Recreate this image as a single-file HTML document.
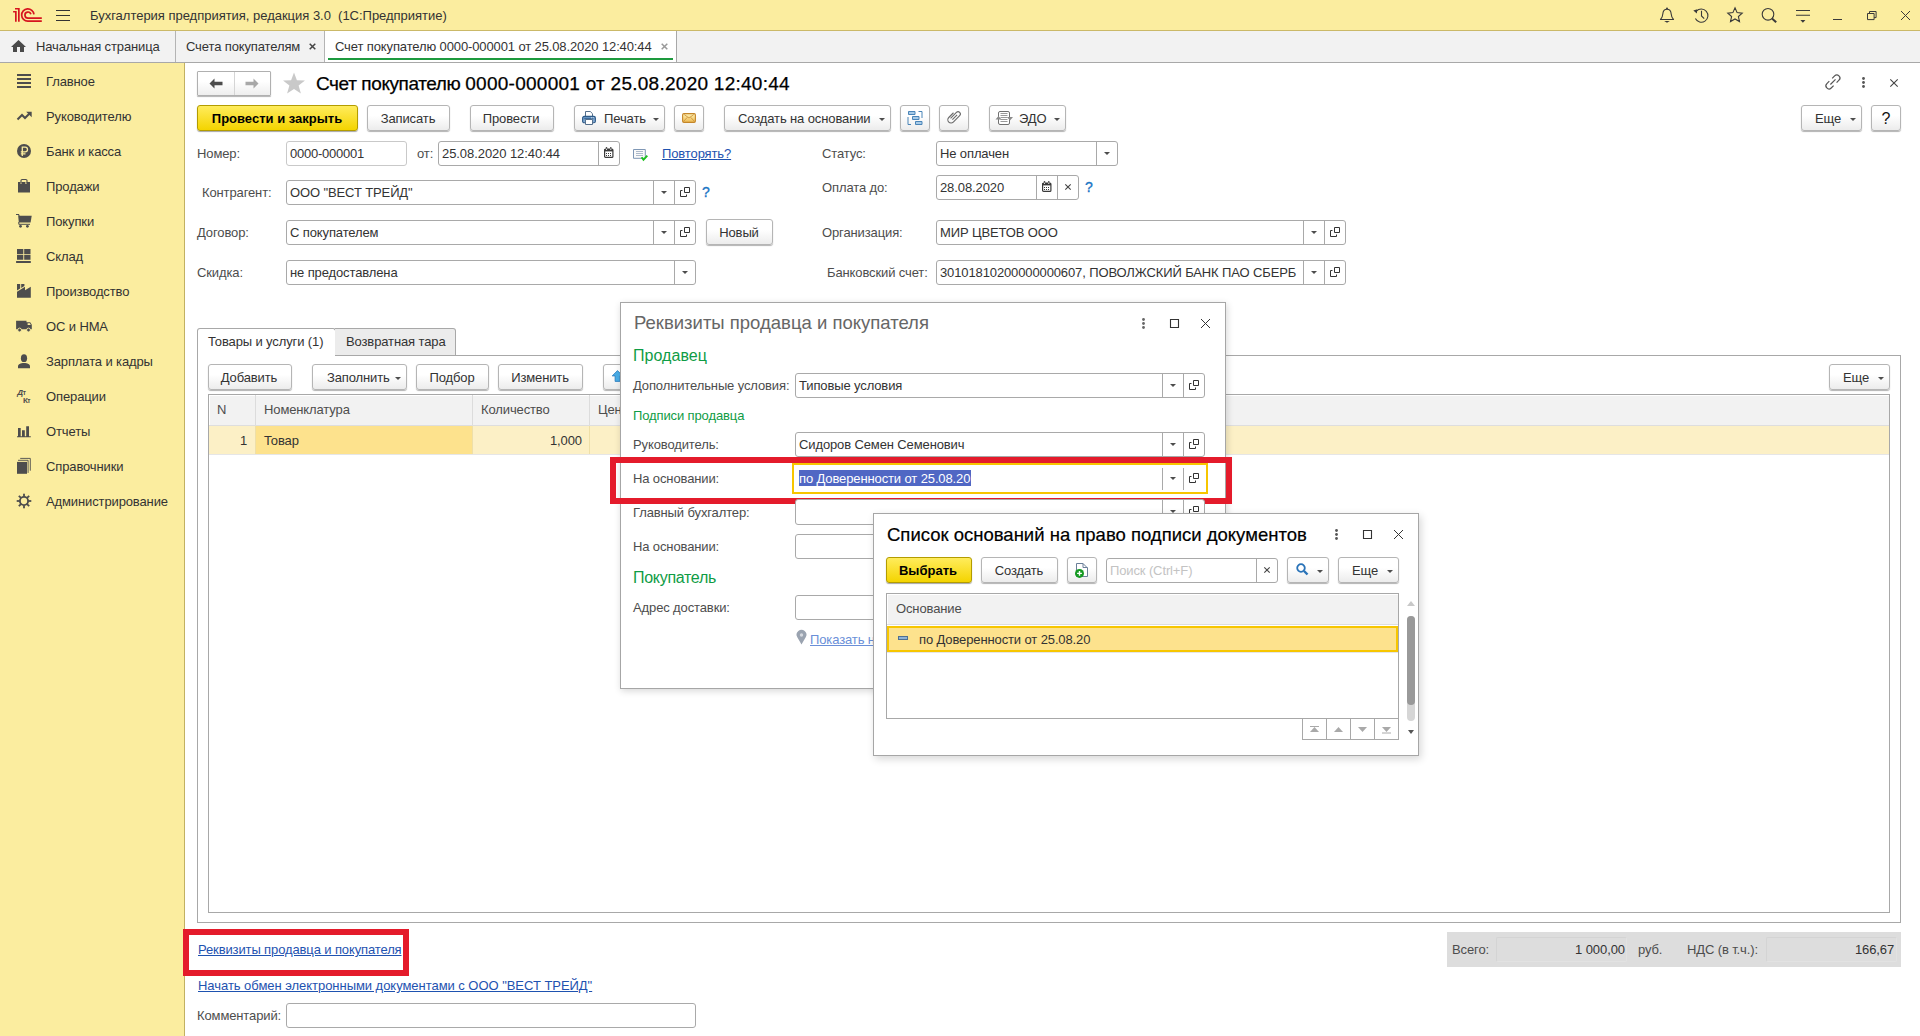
<!DOCTYPE html><html><head><meta charset="utf-8"><title>1C</title><style>
html,body{margin:0;padding:0;}
body{width:1920px;height:1036px;position:relative;overflow:hidden;background:#fff;font-family:'Liberation Sans', sans-serif;}
.t{position:absolute;white-space:pre;font-family:'Liberation Sans', sans-serif;}
.r{position:absolute;box-sizing:border-box;}
svg.r{overflow:visible;}

</style></head><body>
<div class="r" style="left:0px;top:0px;width:1920px;height:30px;background:#fbed9f;"></div>
<div class="r" style="left:0px;top:30px;width:1920px;height:1px;background:#cbb968;"></div>
<svg class="r" style="left:12px;top:7px;" width="31" height="16" viewBox="0 0 31 16"><path d="M1.1 4.75H3.85V14.8 M3 1.75H6.85V14.8" fill="none" stroke="#d6141f" stroke-width="1.7"/><path d="M21.97 7.35A6.17 6.17 0 1 0 15.8 14.2H29.8" fill="none" stroke="#d6141f" stroke-width="1.7"/><path d="M18.9 7.29A3.03 3.03 0 1 0 16 11.1H29.8" fill="none" stroke="#d6141f" stroke-width="1.7"/></svg>
<div class="r" style="left:56px;top:10px;width:14px;height:1px;background:#333333;"></div>
<div class="r" style="left:56px;top:15px;width:14px;height:1px;background:#333333;"></div>
<div class="r" style="left:56px;top:20px;width:14px;height:1px;background:#333333;"></div>
<div class="t" style="top:8px;font-size:13px;line-height:16px;color:#333333;letter-spacing:-0.02px;left:90px;">Бухгалтерия предприятия, редакция 3.0  (1С:Предприятие)</div>
<svg class="r" style="left:1659px;top:6px;" width="16" height="18" viewBox="0 0 16 18"><path d="M1.5 13.5C3 12 3.6 10.5 3.8 8C4 4.8 5.3 3.2 8 3.2C10.7 3.2 12 4.8 12.2 8C12.4 10.5 13 12 14.5 13.5Z" fill="none" stroke="#3a3a3a" stroke-width="1.1" stroke-linejoin="round"/><path d="M5.2 15H10.8L8 16.8Z" fill="#3a3a3a"/><circle cx="8" cy="2.4" r="1" fill="#3a3a3a"/></svg>
<svg class="r" style="left:1693px;top:7px;" width="17" height="17" viewBox="0 0 17 17"><path d="M3.4 4.2A6.6 6.6 0 1 1 2.4 11.5" fill="none" stroke="#3a3a3a" stroke-width="1.1"/><path d="M0.3 3.6L4.3 2.2L3.8 6.6Z" fill="#3a3a3a"/><path d="M8.5 3.8V9L11.2 11.6" fill="none" stroke="#3a3a3a" stroke-width="1.1"/></svg>
<svg class="r" style="left:1727px;top:7px;" width="16" height="16" viewBox="0 0 16 16"><path d="M8 0.8L10.1 5.6L15.2 6.1L11.4 9.5L12.5 14.6L8 12L3.5 14.6L4.6 9.5L0.8 6.1L5.9 5.6Z" fill="none" stroke="#3a3a3a" stroke-width="1.1" stroke-linejoin="miter"/></svg>
<svg class="r" style="left:1761px;top:7px;" width="17" height="17" viewBox="0 0 17 17"><circle cx="7" cy="7.3" r="5.8" fill="none" stroke="#3a3a3a" stroke-width="1.1"/><path d="M11 11.5L15.2 15.3" stroke="#3a3a3a" stroke-width="2"/></svg>
<svg class="r" style="left:1795px;top:8px;" width="16" height="16" viewBox="0 0 16 16"><path d="M1 2.5H15M1 7.3H15" stroke="#3a3a3a" stroke-width="1.1"/><path d="M5.4 12H10.4L7.9 14.8Z" fill="#3a3a3a"/></svg>
<div class="r" style="left:1833px;top:19px;width:9px;height:1px;background:#3a3a3a;"></div>
<svg class="r" style="left:1867px;top:11px;" width="10" height="10" viewBox="0 0 10 10"><path d="M0.5 2.5H7.1V8.6H0.5Z M2.5 2.5V0.5H9.1V6.6H7.1" fill="none" stroke="#3a3a3a" stroke-width="1"/></svg>
<svg class="r" style="left:1901px;top:11px;" width="9" height="9" viewBox="0 0 9 9"><path d="M0 0L9 9M9 0L0 9" stroke="#3a3a3a" stroke-width="1"/></svg>
<div class="r" style="left:0px;top:31px;width:1920px;height:31px;background:#f2f2f2;"></div>
<div class="r" style="left:0px;top:62px;width:1920px;height:1px;background:#a8a8a8;"></div>
<svg class="r" style="left:11px;top:40px;" width="15" height="12" viewBox="0 0 15 12"><path d="M7.5 0L15 7H13V12H9V7H6V12H2V7H0Z" fill="#4a4a4a"/></svg>
<div class="t" style="top:39px;font-size:13px;line-height:16px;color:#333333;letter-spacing:-0.12px;left:36px;">Начальная страница</div>
<div class="r" style="left:175px;top:31px;width:1px;height:31px;background:#b4b4b4;"></div>
<div class="t" style="top:39px;font-size:13px;line-height:16px;color:#333333;letter-spacing:-0.12px;left:186px;">Счета покупателям</div>
<svg class="r" style="left:309px;top:43px;" width="7" height="7" viewBox="0 0 7 7"><path d="M0.7 0.7L6.3 6.3M6.3 0.7L0.7 6.3" stroke="#444" stroke-width="1.5"/></svg>
<div class="r" style="left:324px;top:31px;width:1px;height:31px;background:#b4b4b4;"></div>
<div class="r" style="left:325px;top:31px;width:351px;height:31px;background:#ffffff;"></div>
<div class="r" style="left:676px;top:31px;width:1px;height:31px;background:#a8a8a8;"></div>
<div class="t" style="top:39px;font-size:13px;line-height:16px;color:#333333;letter-spacing:-0.12px;left:335px;">Счет покупателю 0000-000001 от 25.08.2020 12:40:44</div>
<svg class="r" style="left:661px;top:43px;" width="7" height="7" viewBox="0 0 7 7"><path d="M0.7 0.7L6.3 6.3M6.3 0.7L0.7 6.3" stroke="#999" stroke-width="1.5"/></svg>
<div class="r" style="left:328px;top:58px;width:345px;height:2px;background:#1d9a3e;"></div>
<div class="r" style="left:0px;top:63px;width:184px;height:973px;background:#fbed9f;"></div>
<div class="r" style="left:184px;top:63px;width:1px;height:973px;background:#c2b162;"></div>
<div class="t" style="top:74px;font-size:13px;line-height:16px;color:#333;letter-spacing:-0.12px;left:46px;">Главное</div>
<div class="t" style="top:109px;font-size:13px;line-height:16px;color:#333;letter-spacing:-0.12px;left:46px;">Руководителю</div>
<div class="t" style="top:144px;font-size:13px;line-height:16px;color:#333;letter-spacing:-0.12px;left:46px;">Банк и касса</div>
<div class="t" style="top:179px;font-size:13px;line-height:16px;color:#333;letter-spacing:-0.12px;left:46px;">Продажи</div>
<div class="t" style="top:214px;font-size:13px;line-height:16px;color:#333;letter-spacing:-0.12px;left:46px;">Покупки</div>
<div class="t" style="top:249px;font-size:13px;line-height:16px;color:#333;letter-spacing:-0.12px;left:46px;">Склад</div>
<div class="t" style="top:284px;font-size:13px;line-height:16px;color:#333;letter-spacing:-0.12px;left:46px;">Производство</div>
<div class="t" style="top:319px;font-size:13px;line-height:16px;color:#333;letter-spacing:-0.12px;left:46px;">ОС и НМА</div>
<div class="t" style="top:354px;font-size:13px;line-height:16px;color:#333;letter-spacing:-0.12px;left:46px;">Зарплата и кадры</div>
<div class="t" style="top:389px;font-size:13px;line-height:16px;color:#333;letter-spacing:-0.12px;left:46px;">Операции</div>
<div class="t" style="top:424px;font-size:13px;line-height:16px;color:#333;letter-spacing:-0.12px;left:46px;">Отчеты</div>
<div class="t" style="top:459px;font-size:13px;line-height:16px;color:#333;letter-spacing:-0.12px;left:46px;">Справочники</div>
<div class="t" style="top:494px;font-size:13px;line-height:16px;color:#333;letter-spacing:-0.12px;left:46px;">Администрирование</div>
<svg class="r" style="left:17px;top:74px;" width="15" height="15" viewBox="0 0 15 15"><path d="M0 1H14M0 5H14M0 9H14M0 13H14" stroke="#4d4d4d" stroke-width="1.8"/></svg>
<svg class="r" style="left:17px;top:109px;" width="15" height="15" viewBox="0 0 15 15"><path d="M0.5 10.5L5 6L8 9L12.5 4.5" fill="none" stroke="#4d4d4d" stroke-width="2"/><path d="M9.2 2.8H14.7V8.3Z" fill="#4d4d4d"/></svg>
<svg class="r" style="left:17px;top:144px;" width="15" height="15" viewBox="0 0 15 15"><circle cx="7" cy="7" r="7" fill="#4d4d4d"/><path d="M5.3 12V3.2H8.2A2.3 2.3 0 0 1 8.2 7.8H3.8M3.8 9.8H8.5" fill="none" stroke="#fbed9f" stroke-width="1.3"/></svg>
<svg class="r" style="left:17px;top:179px;" width="15" height="15" viewBox="0 0 15 15"><path d="M1 3H3.4V5H4.6V3H8.4V5H9.6V3H13V13.6H1Z" fill="#4d4d4d"/><path d="M4 4.5V1.6A1.1 1.1 0 0 1 5.1 0.5H8.9A1.1 1.1 0 0 1 10 1.6V4.5" fill="none" stroke="#4d4d4d" stroke-width="1.1"/></svg>
<svg class="r" style="left:17px;top:214px;" width="15" height="15" viewBox="0 0 15 15"><path d="M-1 0.5H1.6L2.2 2" fill="none" stroke="#4d4d4d" stroke-width="1.1"/><path d="M1.2 1.8H14.7L13.6 8.6H1.8Z" fill="#4d4d4d"/><path d="M1.8 8V10.3H13" fill="none" stroke="#4d4d4d" stroke-width="1"/><circle cx="3.5" cy="12.3" r="1.4" fill="#4d4d4d"/><circle cx="10.4" cy="12.3" r="1.4" fill="#4d4d4d"/></svg>
<svg class="r" style="left:17px;top:249px;" width="15" height="15" viewBox="0 0 15 15"><path d="M0 0H6.3V5H0Z M7.2 0H13.5V5H7.2Z M0 5.8H6.3V10.7H0Z M7.2 5.8H13.5V10.7H7.2Z M-0.9 12H13.8V13.9H-0.9Z" fill="#4d4d4d"/></svg>
<svg class="r" style="left:17px;top:284px;" width="15" height="15" viewBox="0 0 15 15"><path d="M0 13.8V7.8L8 2.8V6.3L13.8 2.8V13.8Z M0 0H3.2V4.6L0 6.6Z M4.2 0H7.4V2L4.2 4Z" fill="#4d4d4d"/></svg>
<svg class="r" style="left:17px;top:319px;" width="15" height="15" viewBox="0 0 15 15"><path d="M-0.9 1.7H9.5V10.2H-0.9Z M9.5 3.3H13.2L14.8 5.8V10.2H9.5Z" fill="#4d4d4d"/><path d="M10.6 4.3H12.9L13.8 6H10.6Z" fill="#fbed9f"/><circle cx="2.6" cy="11" r="1.9" fill="#4d4d4d" stroke="#fbed9f" stroke-width="0.9"/><circle cx="11.5" cy="11" r="1.9" fill="#4d4d4d" stroke="#fbed9f" stroke-width="0.9"/></svg>
<svg class="r" style="left:17px;top:354px;" width="15" height="15" viewBox="0 0 15 15"><ellipse cx="7" cy="4.2" rx="3.1" ry="3.9" fill="#4d4d4d"/><path d="M1 14.3V12.3C1 10.3 3.5 9 7 9C10.5 9 13 10.3 13 12.3V14.3Z" fill="#4d4d4d"/></svg>
<svg class="r" style="left:17px;top:389px;" width="15" height="15" viewBox="0 0 15 15"><text x="0.2" y="6" font-family="Liberation Sans" font-size="8" font-style="italic" font-weight="bold" fill="#4d4d4d">Д</text><text x="5.8" y="5.6" font-family="Liberation Sans" font-size="6.5" font-weight="bold" fill="#4d4d4d">т</text><text x="5.9" y="14" font-family="Liberation Sans" font-size="8" font-weight="bold" fill="#4d4d4d">К</text><text x="10.3" y="14" font-family="Liberation Sans" font-size="6.5" font-weight="bold" fill="#4d4d4d">т</text></svg>
<svg class="r" style="left:17px;top:424px;" width="15" height="15" viewBox="0 0 15 15"><path d="M1 4H3.7V12.5H1Z M5 6.3H7.8V12.5H5Z M9.2 2.2H12V12.5H9.2Z M0 12.3H13.8V13.2H0Z" fill="#4d4d4d"/></svg>
<svg class="r" style="left:17px;top:459px;" width="15" height="15" viewBox="0 0 15 15"><path d="M0 2.9H10V14.8H0Z" fill="#4d4d4d"/><path d="M1 1.3H11.1V13.9 M3.2 -0.6H13.3V11.7" fill="none" stroke="#4d4d4d" stroke-width="0.9"/></svg>
<svg class="r" style="left:17px;top:494px;" width="15" height="15" viewBox="0 0 15 15"><circle cx="7" cy="7" r="4.1" fill="none" stroke="#4d4d4d" stroke-width="1.9"/><rect x="6.1" y="-0.3" width="1.8" height="3" fill="#4d4d4d" transform="rotate(0 7 7)"/><rect x="6.1" y="-0.3" width="1.8" height="3" fill="#4d4d4d" transform="rotate(45 7 7)"/><rect x="6.1" y="-0.3" width="1.8" height="3" fill="#4d4d4d" transform="rotate(90 7 7)"/><rect x="6.1" y="-0.3" width="1.8" height="3" fill="#4d4d4d" transform="rotate(135 7 7)"/><rect x="6.1" y="-0.3" width="1.8" height="3" fill="#4d4d4d" transform="rotate(180 7 7)"/><rect x="6.1" y="-0.3" width="1.8" height="3" fill="#4d4d4d" transform="rotate(225 7 7)"/><rect x="6.1" y="-0.3" width="1.8" height="3" fill="#4d4d4d" transform="rotate(270 7 7)"/><rect x="6.1" y="-0.3" width="1.8" height="3" fill="#4d4d4d" transform="rotate(315 7 7)"/></svg>
<div class="r" style="left:197px;top:71px;width:74px;height:25px;border:1px solid #b0b0b0;border-radius:1px;background:linear-gradient(#ffffff 40%,#eeeeee);box-shadow:0 1px 1px rgba(0,0,0,0.3);"></div>
<div class="r" style="left:234px;top:72px;width:1px;height:23px;background:#d5d5d5;"></div>
<svg class="r" style="left:209px;top:78px;" width="14" height="11" viewBox="0 0 14 11"><path d="M0.5 5.5L5.5 0.5V3.8H13.5V7.2H5.5V10.5Z" fill="#4d4d4d"/></svg>
<svg class="r" style="left:245px;top:78px;" width="14" height="11" viewBox="0 0 14 11"><path d="M13.5 5.5L8.5 0.5V3.8H0.5V7.2H8.5V10.5Z" fill="#a8a8a8"/></svg>
<svg class="r" style="left:282px;top:72px;" width="24" height="22" viewBox="0 0 24 22"><path d="M12 0.5L14.9 8.2L23 8.4L16.6 13.5L18.9 21.5L12 16.9L5.1 21.5L7.4 13.5L1 8.4L9.1 8.2Z" fill="#c9c9c9"/></svg>
<div class="t" style="top:73px;left:316px;font-size:19px;line-height:22px;color:#000;-webkit-text-stroke:0.25px #000;"><span style="letter-spacing:-0.4px">Счет покупателю </span><span style="letter-spacing:0.26px">0000-000001 от 25.08.2020 12:40:44</span></div>
<svg class="r" style="left:1825px;top:74px;" width="16" height="16" viewBox="0 0 16 16"><path d="M7.2 4.3L9.6 1.9A3 3 0 0 1 14 6.2L11.6 8.6 M8.6 11.6L6.2 14A3 3 0 0 1 1.9 9.6L4.3 7.2 M5.4 10.5L10.5 5.4" fill="none" stroke="#555" stroke-width="1.2"/></svg>
<svg class="r" style="left:1862px;top:77px;" width="3" height="3" viewBox="0 0 3 3"><circle cx="1.5" cy="1.5" r="1.4" fill="#555"/></svg>
<svg class="r" style="left:1862px;top:81px;" width="3" height="3" viewBox="0 0 3 3"><circle cx="1.5" cy="1.5" r="1.4" fill="#555"/></svg>
<svg class="r" style="left:1862px;top:85px;" width="3" height="3" viewBox="0 0 3 3"><circle cx="1.5" cy="1.5" r="1.4" fill="#555"/></svg>
<svg class="r" style="left:1890px;top:79px;" width="8" height="8" viewBox="0 0 8 8"><path d="M0.3 0.3L7.7 7.7M7.7 0.3L0.3 7.7" stroke="#444" stroke-width="1.1"/></svg>
<div class="r" style="left:197px;top:105px;width:161px;height:26px;border:1px solid #b39c00;border-radius:3px;background:linear-gradient(#ffec5c,#f4d400);box-shadow:0 1px 1px rgba(0,0,0,0.35);box-sizing:border-box;"></div>
<div class="t" style="top:111px;font-size:13px;line-height:16px;color:#000;font-weight:bold;left:-23px;width:600px;text-align:center;">Провести и закрыть</div>
<div class="r" style="left:367px;top:105px;width:83px;height:26px;border:1px solid #b5b5b5;border-radius:3px;background:linear-gradient(#ffffff 40%,#ececec);box-shadow:0 1px 1px rgba(0,0,0,0.30);box-sizing:border-box;"></div>
<div class="t" style="top:111px;font-size:13px;line-height:16px;color:#333333;letter-spacing:-0.12px;left:108px;width:600px;text-align:center;">Записать</div>
<div class="r" style="left:470px;top:105px;width:84px;height:26px;border:1px solid #b5b5b5;border-radius:3px;background:linear-gradient(#ffffff 40%,#ececec);box-shadow:0 1px 1px rgba(0,0,0,0.30);box-sizing:border-box;"></div>
<div class="t" style="top:111px;font-size:13px;line-height:16px;color:#333333;letter-spacing:-0.12px;left:211px;width:600px;text-align:center;">Провести</div>
<div class="r" style="left:574px;top:105px;width:91px;height:26px;border:1px solid #b5b5b5;border-radius:3px;background:linear-gradient(#ffffff 40%,#ececec);box-shadow:0 1px 1px rgba(0,0,0,0.30);box-sizing:border-box;"></div>
<div class="t" style="top:111px;font-size:13px;line-height:16px;color:#333333;letter-spacing:-0.12px;left:604px;">Печать</div>
<svg class="r" style="left:653px;top:118px;" width="6" height="3" viewBox="0 0 6 3"><path d="M0 0H6L3.0 3Z" fill="#4d4d4d"/></svg>
<svg class="r" style="left:582px;top:111px;" width="14" height="14" viewBox="0 0 14 14"><defs><linearGradient id="pg" x1="0" y1="0" x2="0" y2="1"><stop offset="0" stop-color="#5f8fc0"/><stop offset="1" stop-color="#8fb3d8"/></linearGradient></defs><path d="M3.5 0.5H8.3L10.5 2.7V6H3.5Z" fill="#fff" stroke="#56708c"/><rect x="0.6" y="5.4" width="12.8" height="6.4" rx="1.6" fill="url(#pg)" stroke="#2f5b88" stroke-width="1.1"/><path d="M2.3 7.6H11.7" stroke="#2f5b88" stroke-width="0.8"/><circle cx="9.6" cy="6.8" r="0.5" fill="#fff"/><circle cx="11.2" cy="6.8" r="0.5" fill="#fff"/><path d="M3.5 8.5H10.5V13.5H3.5Z" fill="#fff" stroke="#56708c"/></svg>
<div class="r" style="left:674px;top:105px;width:30px;height:26px;border:1px solid #b5b5b5;border-radius:3px;background:linear-gradient(#ffffff 40%,#ececec);box-shadow:0 1px 1px rgba(0,0,0,0.30);box-sizing:border-box;"></div>
<svg class="r" style="left:682px;top:113px;" width="14" height="10" viewBox="0 0 14 10"><defs><linearGradient id="eg" x1="0" y1="0" x2="0" y2="1"><stop offset="0" stop-color="#fff3b8"/><stop offset="1" stop-color="#ecb850"/></linearGradient></defs><rect x="0.6" y="0.6" width="12.8" height="8.8" rx="1.3" fill="url(#eg)" stroke="#c4862a" stroke-width="1.1"/><path d="M2.2 1.5L7 5L11.8 1.5 M1.5 8.5L5.3 4.3 M12.5 8.5L8.7 4.3" fill="none" stroke="#c98f35" stroke-width="0.8"/></svg>
<div class="r" style="left:724px;top:105px;width:167px;height:26px;border:1px solid #b5b5b5;border-radius:3px;background:linear-gradient(#ffffff 40%,#ececec);box-shadow:0 1px 1px rgba(0,0,0,0.30);box-sizing:border-box;"></div>
<div class="t" style="top:111px;font-size:13px;line-height:16px;color:#333333;letter-spacing:-0.12px;left:738px;">Создать на основании</div>
<svg class="r" style="left:879px;top:118px;" width="6" height="3" viewBox="0 0 6 3"><path d="M0 0H6L3.0 3Z" fill="#4d4d4d"/></svg>
<div class="r" style="left:900px;top:105px;width:30px;height:26px;border:1px solid #b5b5b5;border-radius:3px;background:linear-gradient(#ffffff 40%,#ececec);box-shadow:0 1px 1px rgba(0,0,0,0.30);box-sizing:border-box;"></div>
<svg class="r" style="left:907px;top:110px;" width="16" height="16" viewBox="0 0 16 16"><path d="M1 7V14.5H4 M11.5 1.5H15V8" fill="none" stroke="#4a85b8" stroke-width="1"/><path d="M1.5 1.5H8V4.5H1.5Z M5.5 6.5H12V9.5H5.5Z M8.5 11.5H15V14.5H8.5Z" fill="#a8cbe8" stroke="#4a85b8" stroke-width="1"/></svg>
<div class="r" style="left:939px;top:105px;width:30px;height:26px;border:1px solid #b5b5b5;border-radius:3px;background:linear-gradient(#ffffff 40%,#ececec);box-shadow:0 1px 1px rgba(0,0,0,0.30);box-sizing:border-box;"></div>
<svg class="r" style="left:947px;top:110px;" width="14" height="15" viewBox="0 0 14 15"><g transform="rotate(45 7 7.5)"><path d="M4.8 11.5V3.2A2.3 2.3 0 0 1 9.4 3.2V12.2A3.2 3.2 0 0 1 3 12.2V5.5 M7.1 4.5V11.2" fill="none" stroke="#6a6a6a" stroke-width="1.1" transform="translate(0.3,-1)"/></g></svg>
<div class="r" style="left:989px;top:105px;width:77px;height:26px;border:1px solid #b5b5b5;border-radius:3px;background:linear-gradient(#ffffff 40%,#ececec);box-shadow:0 1px 1px rgba(0,0,0,0.30);box-sizing:border-box;"></div>
<div class="t" style="top:111px;font-size:13px;line-height:16px;color:#333333;letter-spacing:-0.12px;left:1019px;">ЭДО</div>
<svg class="r" style="left:1054px;top:118px;" width="6" height="3" viewBox="0 0 6 3"><path d="M0 0H6L3.0 3Z" fill="#4d4d4d"/></svg>
<svg class="r" style="left:996px;top:110px;" width="17" height="16" viewBox="0 0 17 16"><rect x="2.5" y="1.5" width="11" height="13" rx="1.5" fill="#fff" stroke="#707070" stroke-width="1"/><path d="M4.5 3.5H11.5M4.5 5.5H11.5M4.5 7.5H11.5M4.5 9.5H11.5M4.5 11.5H11.5" stroke="#808080" stroke-width="0.8"/><path d="M-0.5 9.5L2.5 6L5.5 9.5Z M11 7L14 10.5L17 7Z" fill="#8a8a8a"/></svg>
<div class="r" style="left:1801px;top:105px;width:61px;height:26px;border:1px solid #b5b5b5;border-radius:3px;background:linear-gradient(#ffffff 40%,#ececec);box-shadow:0 1px 1px rgba(0,0,0,0.30);box-sizing:border-box;"></div>
<div class="t" style="top:111px;font-size:13px;line-height:16px;color:#333333;letter-spacing:-0.12px;left:1815px;">Еще</div>
<svg class="r" style="left:1850px;top:118px;" width="6" height="3" viewBox="0 0 6 3"><path d="M0 0H6L3.0 3Z" fill="#4d4d4d"/></svg>
<div class="r" style="left:1871px;top:105px;width:30px;height:26px;border:1px solid #b5b5b5;border-radius:3px;background:linear-gradient(#ffffff 40%,#ececec);box-shadow:0 1px 1px rgba(0,0,0,0.30);box-sizing:border-box;"></div>
<div class="t" style="top:109px;font-size:16px;line-height:19px;color:#111;left:1586px;width:600px;text-align:center;">?</div>
<div class="t" style="top:146px;font-size:13px;line-height:16px;color:#4d4d4d;letter-spacing:-0.12px;left:197px;">Номер:</div>
<div class="r" style="left:286px;top:141px;width:121px;height:25px;background:#fff;border:1px solid #c9c9c9;border-radius:3px;box-sizing:border-box;"></div>
<div class="t" style="top:146px;font-size:13px;line-height:16px;color:#333333;letter-spacing:-0.239px;left:290px;">0000-000001</div>
<div class="t" style="top:146px;font-size:13px;line-height:16px;color:#4d4d4d;letter-spacing:-0.12px;left:417px;">от:</div>
<div class="r" style="left:438px;top:141px;width:182px;height:25px;background:#fff;border:1px solid #a9a9a9;border-radius:3px;box-sizing:border-box;"></div>
<div class="t" style="top:146px;font-size:13px;line-height:16px;color:#333333;letter-spacing:-0.067px;left:442px;">25.08.2020 12:40:44</div>
<div class="r" style="left:598px;top:142px;width:1px;height:23px;background:#a9a9a9;"></div>
<svg class="r" style="left:604px;top:147px;" width="10" height="11" viewBox="0 0 10 11"><rect x="0.6" y="2.1" width="8.3" height="8.3" rx="1" fill="#fff" stroke="#3a3a3a" stroke-width="1.2"/><path d="M0.5 2H9V4.4H0.5Z" fill="#3a3a3a"/><circle cx="2.5" cy="0.9" r="0.8" fill="#3a3a3a"/><circle cx="6.8" cy="0.9" r="0.8" fill="#3a3a3a"/><circle cx="2.5" cy="2.3" r="0.6" fill="#fff"/><circle cx="6.8" cy="2.3" r="0.6" fill="#fff"/><path d="M2 6h1v1h-1z M4 6h1v1h-1z M6 6h1v1h-1z M2 8h1v1h-1z M4 8h1v1h-1z M6 8h1v1h-1z" fill="#3a3a3a"/></svg>
<svg class="r" style="left:633px;top:149px;" width="15" height="12" viewBox="0 0 15 12"><path d="M0.5 0.5H12.3V9.3H0.5Z" fill="#fafafa" stroke="#7f97b5" stroke-width="1"/><path d="M3 2.5H10M3 4.5H10M3 6.5H10" stroke="#8a9cb5" stroke-width="0.7"/><path d="M8.6 8.2L10.5 10.8L14.3 6.6" fill="none" stroke="#1cc01c" stroke-width="1.9"/></svg>
<div class="t" style="top:146px;font-size:13px;line-height:16px;color:#1e52b0;letter-spacing:-0.12px;left:662px;text-decoration:underline;">Повторять?</div>
<div class="t" style="top:146px;font-size:13px;line-height:16px;color:#4d4d4d;letter-spacing:-0.12px;left:822px;">Статус:</div>
<div class="r" style="left:936px;top:141px;width:182px;height:25px;background:#fff;border:1px solid #a9a9a9;border-radius:3px;box-sizing:border-box;"></div>
<div class="t" style="top:146px;font-size:13px;line-height:16px;color:#333333;letter-spacing:-0.12px;left:940px;">Не оплачен</div>
<div class="r" style="left:1096px;top:142px;width:1px;height:23px;background:#a9a9a9;"></div>
<svg class="r" style="left:1104px;top:152px;" width="6" height="3" viewBox="0 0 6 3"><path d="M0 0H6L3.0 3Z" fill="#4d4d4d"/></svg>
<div class="t" style="top:185px;font-size:13px;line-height:16px;color:#4d4d4d;letter-spacing:-0.12px;left:202px;">Контрагент:</div>
<div class="r" style="left:286px;top:180px;width:410px;height:25px;background:#fff;border:1px solid #a9a9a9;border-radius:3px;box-sizing:border-box;"></div>
<div class="t" style="top:185px;font-size:13px;line-height:16px;color:#333333;letter-spacing:-0.12px;left:290px;">ООО "ВЕСТ ТРЕЙД"</div>
<div class="r" style="left:653px;top:181px;width:1px;height:23px;background:#a9a9a9;"></div>
<svg class="r" style="left:661px;top:191px;" width="6" height="3" viewBox="0 0 6 3"><path d="M0 0H6L3.0 3Z" fill="#4d4d4d"/></svg>
<div class="r" style="left:674px;top:181px;width:1px;height:23px;background:#a9a9a9;"></div>
<svg class="r" style="left:680px;top:187px;" width="10" height="10" viewBox="0 0 10 10"><path d="M4.5 0.5H9.5V5.5H4.5Z M2.5 3.5H0.5V9.5H6.5V7.5" fill="none" stroke="#333" stroke-width="1"/></svg>
<div class="t" style="top:184px;font-size:14px;line-height:16px;color:#1a75c4;left:702px;-webkit-text-stroke:0.35px #1a75c4;">?</div>
<div class="t" style="top:180px;font-size:13px;line-height:16px;color:#4d4d4d;letter-spacing:-0.12px;left:822px;">Оплата до:</div>
<div class="r" style="left:936px;top:175px;width:143px;height:25px;background:#fff;border:1px solid #a9a9a9;border-radius:3px;box-sizing:border-box;"></div>
<div class="t" style="top:180px;font-size:13px;line-height:16px;color:#333333;letter-spacing:-0.106px;left:940px;">28.08.2020</div>
<div class="r" style="left:1036px;top:176px;width:1px;height:23px;background:#a9a9a9;"></div>
<svg class="r" style="left:1042px;top:181px;" width="10" height="11" viewBox="0 0 10 11"><rect x="0.6" y="2.1" width="8.3" height="8.3" rx="1" fill="#fff" stroke="#3a3a3a" stroke-width="1.2"/><path d="M0.5 2H9V4.4H0.5Z" fill="#3a3a3a"/><circle cx="2.5" cy="0.9" r="0.8" fill="#3a3a3a"/><circle cx="6.8" cy="0.9" r="0.8" fill="#3a3a3a"/><circle cx="2.5" cy="2.3" r="0.6" fill="#fff"/><circle cx="6.8" cy="2.3" r="0.6" fill="#fff"/><path d="M2 6h1v1h-1z M4 6h1v1h-1z M6 6h1v1h-1z M2 8h1v1h-1z M4 8h1v1h-1z M6 8h1v1h-1z" fill="#3a3a3a"/></svg>
<div class="r" style="left:1057px;top:176px;width:1px;height:23px;background:#a9a9a9;"></div>
<svg class="r" style="left:1065px;top:184px;" width="6" height="6" viewBox="0 0 6 6"><path d="M0.3 0.3L5.7 5.7M5.7 0.3L0.3 5.7" stroke="#444" stroke-width="1.1"/></svg>
<div class="t" style="top:179px;font-size:14px;line-height:16px;color:#1a75c4;left:1085px;-webkit-text-stroke:0.35px #1a75c4;">?</div>
<div class="t" style="top:225px;font-size:13px;line-height:16px;color:#4d4d4d;letter-spacing:-0.12px;left:197px;">Договор:</div>
<div class="r" style="left:286px;top:220px;width:410px;height:25px;background:#fff;border:1px solid #a9a9a9;border-radius:3px;box-sizing:border-box;"></div>
<div class="t" style="top:225px;font-size:13px;line-height:16px;color:#333333;letter-spacing:-0.12px;left:290px;">С покупателем</div>
<div class="r" style="left:653px;top:221px;width:1px;height:23px;background:#a9a9a9;"></div>
<svg class="r" style="left:661px;top:231px;" width="6" height="3" viewBox="0 0 6 3"><path d="M0 0H6L3.0 3Z" fill="#4d4d4d"/></svg>
<div class="r" style="left:674px;top:221px;width:1px;height:23px;background:#a9a9a9;"></div>
<svg class="r" style="left:680px;top:227px;" width="10" height="10" viewBox="0 0 10 10"><path d="M4.5 0.5H9.5V5.5H4.5Z M2.5 3.5H0.5V9.5H6.5V7.5" fill="none" stroke="#333" stroke-width="1"/></svg>
<div class="r" style="left:706px;top:219px;width:67px;height:26px;border:1px solid #b5b5b5;border-radius:3px;background:linear-gradient(#ffffff 40%,#ececec);box-shadow:0 1px 1px rgba(0,0,0,0.30);box-sizing:border-box;"></div>
<div class="t" style="top:225px;font-size:13px;line-height:16px;color:#333333;letter-spacing:-0.12px;left:439px;width:600px;text-align:center;">Новый</div>
<div class="t" style="top:225px;font-size:13px;line-height:16px;color:#4d4d4d;letter-spacing:-0.12px;left:822px;">Организация:</div>
<div class="r" style="left:936px;top:220px;width:410px;height:25px;background:#fff;border:1px solid #a9a9a9;border-radius:3px;box-sizing:border-box;"></div>
<div class="t" style="top:225px;font-size:13px;line-height:16px;color:#333333;letter-spacing:-0.12px;left:940px;">МИР ЦВЕТОВ ООО</div>
<div class="r" style="left:1303px;top:221px;width:1px;height:23px;background:#a9a9a9;"></div>
<svg class="r" style="left:1311px;top:231px;" width="6" height="3" viewBox="0 0 6 3"><path d="M0 0H6L3.0 3Z" fill="#4d4d4d"/></svg>
<div class="r" style="left:1324px;top:221px;width:1px;height:23px;background:#a9a9a9;"></div>
<svg class="r" style="left:1330px;top:227px;" width="10" height="10" viewBox="0 0 10 10"><path d="M4.5 0.5H9.5V5.5H4.5Z M2.5 3.5H0.5V9.5H6.5V7.5" fill="none" stroke="#333" stroke-width="1"/></svg>
<div class="t" style="top:265px;font-size:13px;line-height:16px;color:#4d4d4d;letter-spacing:-0.12px;left:197px;">Скидка:</div>
<div class="r" style="left:286px;top:260px;width:410px;height:25px;background:#fff;border:1px solid #a9a9a9;border-radius:3px;box-sizing:border-box;"></div>
<div class="t" style="top:265px;font-size:13px;line-height:16px;color:#333333;letter-spacing:-0.12px;left:290px;">не предоставлена</div>
<div class="r" style="left:674px;top:261px;width:1px;height:23px;background:#a9a9a9;"></div>
<svg class="r" style="left:682px;top:271px;" width="6" height="3" viewBox="0 0 6 3"><path d="M0 0H6L3.0 3Z" fill="#4d4d4d"/></svg>
<div class="t" style="top:265px;font-size:13px;line-height:16px;color:#4d4d4d;letter-spacing:-0.12px;left:827px;">Банковский счет:</div>
<div class="r" style="left:936px;top:260px;width:410px;height:25px;background:#fff;border:1px solid #a9a9a9;border-radius:3px;box-sizing:border-box;"></div>
<div class="t" style="top:265px;font-size:13px;line-height:16px;color:#333333;letter-spacing:-0.12px;left:940px;">30101810200000000607, ПОВОЛЖСКИЙ БАНК ПАО СБЕРБ</div>
<div class="r" style="left:1303px;top:261px;width:1px;height:23px;background:#a9a9a9;"></div>
<svg class="r" style="left:1311px;top:271px;" width="6" height="3" viewBox="0 0 6 3"><path d="M0 0H6L3.0 3Z" fill="#4d4d4d"/></svg>
<div class="r" style="left:1324px;top:261px;width:1px;height:23px;background:#a9a9a9;"></div>
<svg class="r" style="left:1330px;top:267px;" width="10" height="10" viewBox="0 0 10 10"><path d="M4.5 0.5H9.5V5.5H4.5Z M2.5 3.5H0.5V9.5H6.5V7.5" fill="none" stroke="#333" stroke-width="1"/></svg>
<div class="r" style="left:197px;top:355px;width:1704px;height:568px;border:1px solid #a8a8a8;border-top:none;"></div>
<div class="r" style="left:455px;top:355px;width:1446px;height:1px;background:#a8a8a8;"></div>
<div class="r" style="left:197px;top:328px;width:139px;height:28px;background:#fff;border:1px solid #a8a8a8;border-bottom:none;border-top-left-radius:3px;border-top-right-radius:3px;"></div>
<div class="r" style="left:335px;top:328px;width:121px;height:28px;background:#ececec;border:1px solid #a8a8a8;border-left:none;border-top-right-radius:3px;"></div>
<div class="t" style="top:334px;font-size:13px;line-height:16px;color:#333333;letter-spacing:-0.12px;left:208px;">Товары и услуги (1)</div>
<div class="t" style="top:334px;font-size:13px;line-height:16px;color:#333333;letter-spacing:-0.12px;left:346px;">Возвратная тара</div>
<div class="r" style="left:208px;top:364px;width:84px;height:26px;border:1px solid #b5b5b5;border-radius:3px;background:linear-gradient(#ffffff 40%,#ececec);box-shadow:0 1px 1px rgba(0,0,0,0.30);box-sizing:border-box;"></div>
<div class="t" style="top:370px;font-size:13px;line-height:16px;color:#333333;letter-spacing:-0.12px;left:-51px;width:600px;text-align:center;">Добавить</div>
<div class="r" style="left:312px;top:364px;width:95px;height:26px;border:1px solid #b5b5b5;border-radius:3px;background:linear-gradient(#ffffff 40%,#ececec);box-shadow:0 1px 1px rgba(0,0,0,0.30);box-sizing:border-box;"></div>
<div class="t" style="top:370px;font-size:13px;line-height:16px;color:#333333;letter-spacing:-0.12px;left:327px;">Заполнить</div>
<svg class="r" style="left:395px;top:377px;" width="6" height="3" viewBox="0 0 6 3"><path d="M0 0H6L3.0 3Z" fill="#4d4d4d"/></svg>
<div class="r" style="left:416px;top:364px;width:73px;height:26px;border:1px solid #b5b5b5;border-radius:3px;background:linear-gradient(#ffffff 40%,#ececec);box-shadow:0 1px 1px rgba(0,0,0,0.30);box-sizing:border-box;"></div>
<div class="t" style="top:370px;font-size:13px;line-height:16px;color:#333333;letter-spacing:-0.12px;left:152px;width:600px;text-align:center;">Подбор</div>
<div class="r" style="left:498px;top:364px;width:85px;height:26px;border:1px solid #b5b5b5;border-radius:3px;background:linear-gradient(#ffffff 40%,#ececec);box-shadow:0 1px 1px rgba(0,0,0,0.30);box-sizing:border-box;"></div>
<div class="t" style="top:370px;font-size:13px;line-height:16px;color:#333333;letter-spacing:-0.12px;left:240px;width:600px;text-align:center;">Изменить</div>
<div class="r" style="left:603px;top:364px;width:58px;height:26px;border:1px solid #b5b5b5;border-radius:3px;background:linear-gradient(#ffffff 40%,#ececec);box-shadow:0 1px 1px rgba(0,0,0,0.30);box-sizing:border-box;"></div>
<svg class="r" style="left:612px;top:370px;" width="12" height="13" viewBox="0 0 12 13"><path d="M5.5 0.6L10.8 5.9H7.9V11.4H3.1V5.9H0.2Z" fill="#4aaee8" stroke="#2a7bbd" stroke-width="0.8"/></svg>
<div class="r" style="left:1829px;top:364px;width:61px;height:26px;border:1px solid #b5b5b5;border-radius:3px;background:linear-gradient(#ffffff 40%,#ececec);box-shadow:0 1px 1px rgba(0,0,0,0.30);box-sizing:border-box;"></div>
<div class="t" style="top:370px;font-size:13px;line-height:16px;color:#333333;letter-spacing:-0.12px;left:1843px;">Еще</div>
<svg class="r" style="left:1878px;top:377px;" width="6" height="3" viewBox="0 0 6 3"><path d="M0 0H6L3.0 3Z" fill="#4d4d4d"/></svg>
<div class="r" style="left:208px;top:394px;width:1682px;height:519px;background:#fff;border:1px solid #a8a8a8;"></div>
<div class="r" style="left:210px;top:396px;width:1679px;height:29px;background:#f2f2f2;"></div>
<div class="r" style="left:209px;top:425px;width:1680px;height:1px;background:#dedede;"></div>
<div class="r" style="left:255px;top:395px;width:1px;height:30px;background:#dcdcdc;"></div>
<div class="r" style="left:472px;top:395px;width:1px;height:30px;background:#dcdcdc;"></div>
<div class="r" style="left:589px;top:395px;width:1px;height:30px;background:#dcdcdc;"></div>
<div class="t" style="top:402px;font-size:13px;line-height:16px;color:#4d4d4d;letter-spacing:-0.12px;left:217px;">N</div>
<div class="t" style="top:402px;font-size:13px;line-height:16px;color:#4d4d4d;letter-spacing:-0.12px;left:264px;">Номенклатура</div>
<div class="t" style="top:402px;font-size:13px;line-height:16px;color:#4d4d4d;letter-spacing:-0.12px;left:481px;">Количество</div>
<div class="t" style="top:402px;font-size:13px;line-height:16px;color:#4d4d4d;letter-spacing:-0.12px;left:598px;">Цена</div>
<div class="r" style="left:209px;top:426px;width:1680px;height:28px;background:#fcf0c6;"></div>
<div class="r" style="left:256px;top:426px;width:216px;height:28px;background:#fde28d;"></div>
<div class="r" style="left:255px;top:426px;width:1px;height:28px;background:#eedfa8;"></div>
<div class="r" style="left:472px;top:426px;width:1px;height:28px;background:#eedfa8;"></div>
<div class="r" style="left:589px;top:426px;width:1px;height:28px;background:#eedfa8;"></div>
<div class="r" style="left:209px;top:454px;width:1680px;height:1px;background:#e6e6e6;"></div>
<div class="t" style="top:433px;font-size:13px;line-height:16px;color:#333333;letter-spacing:-0.23px;right:1673px;text-align:right;">1</div>
<div class="t" style="top:433px;font-size:13px;line-height:16px;color:#333333;letter-spacing:-0.12px;left:264px;">Товар</div>
<div class="t" style="top:433px;font-size:13px;line-height:16px;color:#333333;letter-spacing:-0.106px;right:1338px;text-align:right;">1,000</div>
<div class="r" style="left:183px;top:929px;width:226px;height:47px;border:6px solid #e41b2b;"></div>
<div class="t" style="top:942px;font-size:13px;line-height:16px;color:#1e52b0;letter-spacing:-0.12px;left:198px;text-decoration:underline;">Реквизиты продавца и покупателя</div>
<div class="t" style="top:978px;font-size:13px;line-height:16px;color:#1e52b0;letter-spacing:-0.04px;left:198px;text-decoration:underline;">Начать обмен электронными документами с ООО "ВЕСТ ТРЕЙД"</div>
<div class="t" style="top:1008px;font-size:13px;line-height:16px;color:#4d4d4d;letter-spacing:-0.12px;left:197px;">Комментарий:</div>
<div class="r" style="left:286px;top:1003px;width:410px;height:25px;background:#fff;border:1px solid #a9a9a9;border-radius:3px;box-sizing:border-box;"></div>
<div class="r" style="left:1447px;top:932px;width:454px;height:35px;background:#dddddd;"></div>
<div class="r" style="left:1496px;top:937px;width:131px;height:25px;border:1px solid #d4d4d4;border-radius:2px;border-bottom-color:#e2e2e2;border-right-color:#e2e2e2;"></div>
<div class="r" style="left:1766px;top:937px;width:131px;height:25px;border:1px solid #d4d4d4;border-radius:2px;border-bottom-color:#e2e2e2;border-right-color:#e2e2e2;"></div>
<div class="t" style="top:942px;font-size:13px;line-height:16px;color:#4d4d4d;letter-spacing:-0.12px;left:1452px;">Всего:</div>
<div class="t" style="top:942px;font-size:13px;line-height:16px;color:#333333;letter-spacing:-0.075px;right:295px;text-align:right;">1 000,00</div>
<div class="t" style="top:942px;font-size:13px;line-height:16px;color:#4d4d4d;letter-spacing:-0.12px;left:1638px;">руб.</div>
<div class="t" style="top:942px;font-size:13px;line-height:16px;color:#4d4d4d;letter-spacing:-0.12px;left:1687px;">НДС (в т.ч.):</div>
<div class="t" style="top:942px;font-size:13px;line-height:16px;color:#333333;letter-spacing:-0.127px;right:26px;text-align:right;">166,67</div>
<div class="r" style="left:620px;top:302px;width:606px;height:387px;background:#fff;border:1px solid #a6a6a6;box-shadow:1px 2px 7px rgba(0,0,0,0.16);"></div>
<div class="t" style="top:312px;font-size:18.5px;line-height:21px;color:#666666;left:634px;">Реквизиты продавца и покупателя</div>
<svg class="r" style="left:1142px;top:318px;" width="3" height="3" viewBox="0 0 3 3"><circle cx="1.5" cy="1.5" r="1.4" fill="#666"/></svg>
<svg class="r" style="left:1142px;top:322px;" width="3" height="3" viewBox="0 0 3 3"><circle cx="1.5" cy="1.5" r="1.4" fill="#666"/></svg>
<svg class="r" style="left:1142px;top:326px;" width="3" height="3" viewBox="0 0 3 3"><circle cx="1.5" cy="1.5" r="1.4" fill="#666"/></svg>
<svg class="r" style="left:1170px;top:319px;" width="9" height="9" viewBox="0 0 9 9"><path d="M0.5 0.5H8.5V8.5H0.5Z" fill="none" stroke="#333" stroke-width="1.1"/></svg>
<svg class="r" style="left:1201px;top:319px;" width="9" height="9" viewBox="0 0 9 9"><path d="M0 0L9 9M9 0L0 9" stroke="#333" stroke-width="1"/></svg>
<div class="t" style="top:346px;font-size:16px;line-height:19px;color:#0f9c45;letter-spacing:0.05px;left:633px;">Продавец</div>
<div class="t" style="top:378px;font-size:13px;line-height:16px;color:#4d4d4d;letter-spacing:-0.12px;left:633px;">Дополнительные условия:</div>
<div class="r" style="left:795px;top:373px;width:410px;height:25px;background:#fff;border:1px solid #a9a9a9;border-radius:3px;box-sizing:border-box;"></div>
<div class="t" style="top:378px;font-size:13px;line-height:16px;color:#333333;letter-spacing:-0.12px;left:799px;">Типовые условия</div>
<div class="r" style="left:1162px;top:374px;width:1px;height:23px;background:#a9a9a9;"></div>
<svg class="r" style="left:1170px;top:384px;" width="6" height="3" viewBox="0 0 6 3"><path d="M0 0H6L3.0 3Z" fill="#4d4d4d"/></svg>
<div class="r" style="left:1183px;top:374px;width:1px;height:23px;background:#a9a9a9;"></div>
<svg class="r" style="left:1189px;top:380px;" width="10" height="10" viewBox="0 0 10 10"><path d="M4.5 0.5H9.5V5.5H4.5Z M2.5 3.5H0.5V9.5H6.5V7.5" fill="none" stroke="#333" stroke-width="1"/></svg>
<div class="t" style="top:408px;font-size:13px;line-height:16px;color:#0f9c45;letter-spacing:-0.12px;left:633px;">Подписи продавца</div>
<div class="t" style="top:437px;font-size:13px;line-height:16px;color:#4d4d4d;letter-spacing:-0.12px;left:633px;">Руководитель:</div>
<div class="r" style="left:795px;top:432px;width:410px;height:25px;background:#fff;border:1px solid #a9a9a9;border-radius:3px;box-sizing:border-box;"></div>
<div class="t" style="top:437px;font-size:13px;line-height:16px;color:#333333;letter-spacing:-0.12px;left:799px;">Сидоров Семен Семенович</div>
<div class="r" style="left:1162px;top:433px;width:1px;height:23px;background:#a9a9a9;"></div>
<svg class="r" style="left:1170px;top:443px;" width="6" height="3" viewBox="0 0 6 3"><path d="M0 0H6L3.0 3Z" fill="#4d4d4d"/></svg>
<div class="r" style="left:1183px;top:433px;width:1px;height:23px;background:#a9a9a9;"></div>
<svg class="r" style="left:1189px;top:439px;" width="10" height="10" viewBox="0 0 10 10"><path d="M4.5 0.5H9.5V5.5H4.5Z M2.5 3.5H0.5V9.5H6.5V7.5" fill="none" stroke="#333" stroke-width="1"/></svg>
<div class="t" style="top:471px;font-size:13px;line-height:16px;color:#4d4d4d;letter-spacing:-0.12px;left:633px;">На основании:</div>
<div class="r" style="left:792px;top:463px;width:416px;height:31px;background:#fff;border:2px solid #f7c600;"></div>
<div class="r" style="left:1162px;top:468px;width:1px;height:22px;background:#a9a9a9;"></div>
<div class="r" style="left:1183px;top:468px;width:1px;height:22px;background:#a9a9a9;"></div>
<svg class="r" style="left:1170px;top:477px;" width="6" height="3" viewBox="0 0 6 3"><path d="M0 0H6L3.0 3Z" fill="#4d4d4d"/></svg>
<svg class="r" style="left:1189px;top:473px;" width="10" height="10" viewBox="0 0 10 10"><path d="M4.5 0.5H9.5V5.5H4.5Z M2.5 3.5H0.5V9.5H6.5V7.5" fill="none" stroke="#333" stroke-width="1"/></svg>
<div class="r" style="left:799px;top:470px;width:172px;height:16px;background:#5067c4;"></div>
<div class="t" style="top:471px;font-size:13px;line-height:16px;color:#ffffff;letter-spacing:-0.12px;left:799px;">по Доверенности от 25.08.20</div>
<div class="r" style="left:610px;top:457px;width:622px;height:47px;border:6px solid #e41b2b;"></div>
<div class="t" style="top:505px;font-size:13px;line-height:16px;color:#4d4d4d;letter-spacing:-0.12px;left:633px;">Главный бухгалтер:</div>
<div class="r" style="left:795px;top:499px;width:410px;height:26px;background:#fff;border:1px solid #a9a9a9;border-radius:3px;box-sizing:border-box;"></div>
<div class="r" style="left:1162px;top:500px;width:1px;height:24px;background:#a9a9a9;"></div>
<svg class="r" style="left:1170px;top:510px;" width="6" height="3" viewBox="0 0 6 3"><path d="M0 0H6L3.0 3Z" fill="#4d4d4d"/></svg>
<div class="r" style="left:1183px;top:500px;width:1px;height:24px;background:#a9a9a9;"></div>
<svg class="r" style="left:1189px;top:506px;" width="10" height="10" viewBox="0 0 10 10"><path d="M4.5 0.5H9.5V5.5H4.5Z M2.5 3.5H0.5V9.5H6.5V7.5" fill="none" stroke="#333" stroke-width="1"/></svg>
<div class="t" style="top:539px;font-size:13px;line-height:16px;color:#4d4d4d;letter-spacing:-0.12px;left:633px;">На основании:</div>
<div class="r" style="left:795px;top:534px;width:410px;height:25px;background:#fff;border:1px solid #a9a9a9;border-radius:3px;box-sizing:border-box;"></div>
<div class="t" style="top:568px;font-size:16px;line-height:19px;color:#0f9c45;letter-spacing:-0.3px;left:633px;">Покупатель</div>
<div class="t" style="top:600px;font-size:13px;line-height:16px;color:#4d4d4d;letter-spacing:-0.12px;left:633px;">Адрес доставки:</div>
<div class="r" style="left:795px;top:595px;width:410px;height:25px;background:#fff;border:1px solid #a9a9a9;border-radius:3px;box-sizing:border-box;"></div>
<svg class="r" style="left:796px;top:630px;" width="11" height="15" viewBox="0 0 11 15"><path d="M5.5 14.5L1.3 7.3A4.9 4.9 0 1 1 9.7 7.3Z" fill="#9aa3b0"/><circle cx="5.5" cy="5" r="1.7" fill="#d5d9df"/></svg>
<div class="t" style="top:632px;font-size:13px;line-height:16px;color:#6a8fd8;letter-spacing:-0.12px;left:810px;text-decoration:underline;">Показать на карте</div>
<div class="r" style="left:873px;top:513px;width:546px;height:243px;background:#fff;border:1px solid #a6a6a6;box-shadow:2px 3px 8px rgba(0,0,0,0.16);"></div>
<div class="t" style="top:524px;font-size:18.5px;line-height:21px;color:#000;left:887px;-webkit-text-stroke:0.2px #000;">Список оснований на право подписи документов</div>
<svg class="r" style="left:1335px;top:529px;" width="3" height="3" viewBox="0 0 3 3"><circle cx="1.5" cy="1.5" r="1.4" fill="#555"/></svg>
<svg class="r" style="left:1335px;top:533px;" width="3" height="3" viewBox="0 0 3 3"><circle cx="1.5" cy="1.5" r="1.4" fill="#555"/></svg>
<svg class="r" style="left:1335px;top:537px;" width="3" height="3" viewBox="0 0 3 3"><circle cx="1.5" cy="1.5" r="1.4" fill="#555"/></svg>
<svg class="r" style="left:1363px;top:530px;" width="9" height="9" viewBox="0 0 9 9"><path d="M0.5 0.5H8.5V8.5H0.5Z" fill="none" stroke="#333" stroke-width="1.1"/></svg>
<svg class="r" style="left:1394px;top:530px;" width="9" height="9" viewBox="0 0 9 9"><path d="M0 0L9 9M9 0L0 9" stroke="#333" stroke-width="1"/></svg>
<div class="r" style="left:886px;top:557px;width:86px;height:26px;border:1px solid #b39c00;border-radius:3px;background:linear-gradient(#ffec5c,#f4d400);box-shadow:0 1px 1px rgba(0,0,0,0.35);box-sizing:border-box;"></div>
<div class="t" style="top:563px;font-size:13px;line-height:16px;color:#000;font-weight:bold;left:628px;width:600px;text-align:center;">Выбрать</div>
<div class="r" style="left:981px;top:557px;width:77px;height:26px;border:1px solid #b5b5b5;border-radius:3px;background:linear-gradient(#ffffff 40%,#ececec);box-shadow:0 1px 1px rgba(0,0,0,0.30);box-sizing:border-box;"></div>
<div class="t" style="top:563px;font-size:13px;line-height:16px;color:#333333;letter-spacing:-0.12px;left:719px;width:600px;text-align:center;">Создать</div>
<div class="r" style="left:1067px;top:557px;width:30px;height:26px;border:1px solid #b5b5b5;border-radius:3px;background:linear-gradient(#ffffff 40%,#ececec);box-shadow:0 1px 1px rgba(0,0,0,0.30);box-sizing:border-box;"></div>
<svg class="r" style="left:1074px;top:562px;" width="15" height="16" viewBox="0 0 15 16"><path d="M2.5 1.5H9L13.5 6V14.5H2.5Z" fill="#fff" stroke="#6a7f99" stroke-width="1"/><path d="M9 1.5V5.5H13.5" fill="none" stroke="#6a7f99" stroke-width="1"/><circle cx="5.5" cy="11.4" r="4.5" fill="#159a22"/><path d="M5.5 9V13.8M3.1 11.4H7.9" stroke="#fff" stroke-width="1.4"/></svg>
<div class="r" style="left:1106px;top:558px;width:172px;height:25px;background:#fff;border:1px solid #a9a9a9;border-radius:3px;box-sizing:border-box;"></div>
<div class="r" style="left:1256px;top:559px;width:1px;height:23px;background:#a9a9a9;"></div>
<svg class="r" style="left:1264px;top:567px;" width="6" height="6" viewBox="0 0 6 6"><path d="M0.3 0.3L5.7 5.7M5.7 0.3L0.3 5.7" stroke="#444" stroke-width="1.1"/></svg>
<div class="t" style="top:563px;font-size:13px;line-height:16px;color:#c3c3c3;letter-spacing:-0.12px;left:1110px;">Поиск (Ctrl+F)</div>
<div class="r" style="left:1287px;top:557px;width:42px;height:26px;border:1px solid #b5b5b5;border-radius:3px;background:linear-gradient(#ffffff 40%,#ececec);box-shadow:0 1px 1px rgba(0,0,0,0.30);box-sizing:border-box;"></div>
<svg class="r" style="left:1317px;top:570px;" width="6" height="3" viewBox="0 0 6 3"><path d="M0 0H6L3.0 3Z" fill="#4d4d4d"/></svg>
<svg class="r" style="left:1296px;top:563px;" width="13" height="13" viewBox="0 0 13 13"><circle cx="5" cy="5" r="3.8" fill="none" stroke="#2a73b8" stroke-width="1.8"/><path d="M8 8L11.5 11.5" stroke="#2a73b8" stroke-width="2.4"/></svg>
<div class="r" style="left:1338px;top:557px;width:61px;height:26px;border:1px solid #b5b5b5;border-radius:3px;background:linear-gradient(#ffffff 40%,#ececec);box-shadow:0 1px 1px rgba(0,0,0,0.30);box-sizing:border-box;"></div>
<div class="t" style="top:563px;font-size:13px;line-height:16px;color:#333333;letter-spacing:-0.12px;left:1352px;">Еще</div>
<svg class="r" style="left:1387px;top:570px;" width="6" height="3" viewBox="0 0 6 3"><path d="M0 0H6L3.0 3Z" fill="#4d4d4d"/></svg>
<div class="r" style="left:886px;top:593px;width:513px;height:126px;background:#fff;border:1px solid #a8a8a8;"></div>
<div class="r" style="left:888px;top:595px;width:510px;height:29px;background:#f2f2f2;"></div>
<div class="r" style="left:887px;top:624px;width:511px;height:1px;background:#dedede;"></div>
<div class="t" style="top:601px;font-size:13px;line-height:16px;color:#4d4d4d;letter-spacing:-0.12px;left:896px;">Основание</div>
<div class="r" style="left:887px;top:626px;width:511px;height:26px;background:#fde28d;border:2px solid #f7c600;"></div>
<div class="r" style="left:887px;top:652px;width:511px;height:1px;background:#e6e6e6;"></div>
<div class="r" style="left:898px;top:636px;width:10px;height:4px;background:#8fb3d6;border:1px solid #4f7091;"></div>
<div class="t" style="top:632px;font-size:13px;line-height:16px;color:#333333;letter-spacing:-0.12px;left:919px;">по Доверенности от 25.08.20</div>
<div class="r" style="left:1302px;top:718px;width:97px;height:22px;background:#fff;border:1px solid #a8a8a8;"></div>
<div class="r" style="left:1326px;top:719px;width:1px;height:20px;background:#a8a8a8;"></div>
<div class="r" style="left:1350px;top:719px;width:1px;height:20px;background:#a8a8a8;"></div>
<div class="r" style="left:1374px;top:719px;width:1px;height:20px;background:#a8a8a8;"></div>
<svg class="r" style="left:1310px;top:726px;" width="9" height="7" viewBox="0 0 9 7"><path d="M0 0.5H9" stroke="#a9a9a9"/><path d="M0 6L4.5 1L9 6Z" fill="#a9a9a9"/></svg>
<svg class="r" style="left:1334px;top:727px;" width="9" height="5" viewBox="0 0 9 5"><path d="M0 5L4.5 0L9 5Z" fill="#a9a9a9"/></svg>
<svg class="r" style="left:1358px;top:727px;" width="9" height="5" viewBox="0 0 9 5"><path d="M0 0L4.5 5L9 0Z" fill="#a9a9a9"/></svg>
<svg class="r" style="left:1382px;top:727px;" width="9" height="7" viewBox="0 0 9 7"><path d="M0 6H9" stroke="#a9a9a9"/><path d="M0 0L4.5 5L9 0Z" fill="#a9a9a9"/></svg>
<div class="r" style="left:1407px;top:616px;width:8px;height:105px;background:#d6d6d6;border-radius:4px;"></div>
<div class="r" style="left:1407px;top:616px;width:8px;height:89px;background:#999999;border-radius:4px;"></div>
<svg class="r" style="left:1407px;top:601px;" width="8" height="5" viewBox="0 0 8 5"><path d="M0 5L4 0L8 5Z" fill="#c8c8c8"/></svg>
<svg class="r" style="left:1408px;top:730px;" width="6" height="4" viewBox="0 0 6 4"><path d="M0 0L3 4L6 0Z" fill="#555"/></svg>
